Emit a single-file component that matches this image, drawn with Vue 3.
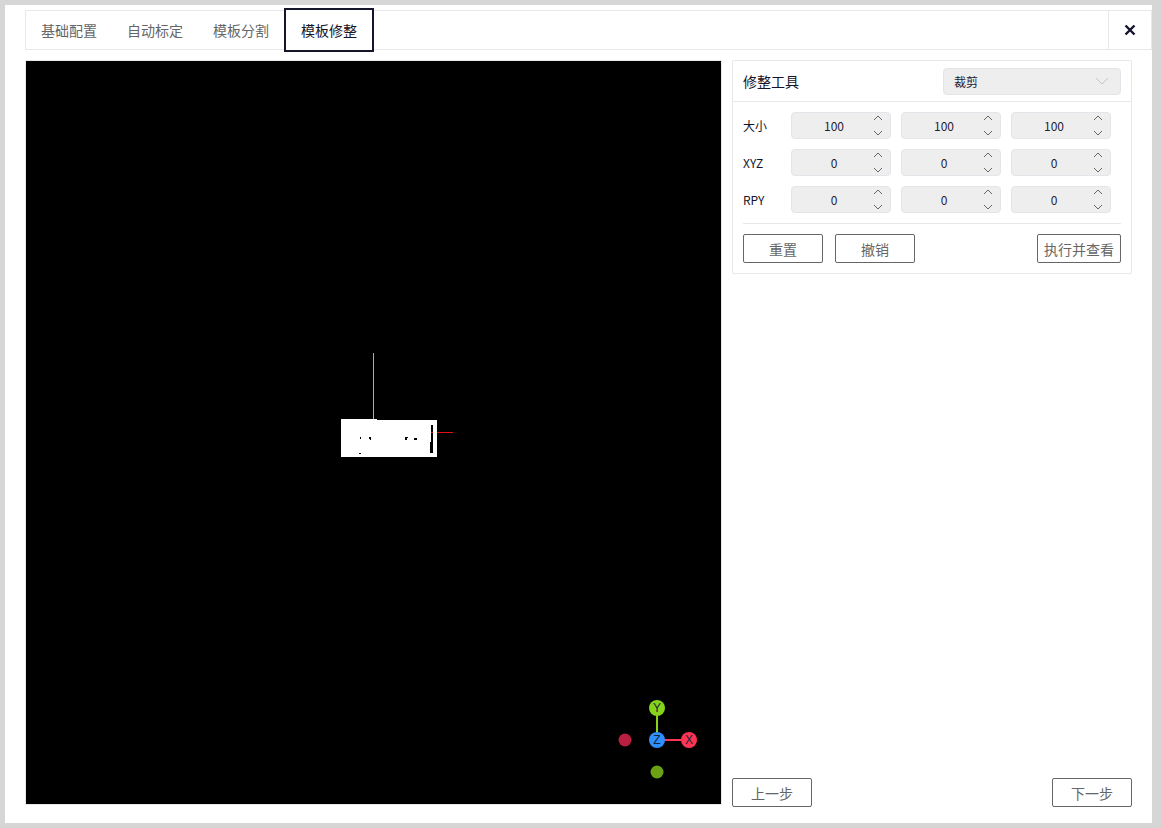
<script setup>
const tabs = ['基础配置', '自动标定', '模板分割', '模板修整'];
const activeTab = 3;

const rows = [
  { label: '大小', values: [100, 100, 100] },
  { label: 'XYZ', values: [0, 0, 0] },
  { label: 'RPY', values: [0, 0, 0] },
];

// little black holes in the point cloud
const specks = [
  [360, 437, 1, 2], [369, 437, 2, 2], [370, 439, 1, 1], [405, 437, 2, 3], [407, 437, 1, 1],
  [414, 438, 3, 2], [359, 453, 2, 1], [431, 425, 2, 28], [430, 442, 1, 9], [430, 451, 3, 2],
];
</script>

<template>
  <div class="page">
    <div class="tabs">
      <div class="tab-list">
        <div
          v-for="(tab, i) in tabs"
          :key="tab"
          class="tab"
          :class="{ active: i === activeTab }"
        >{{ tab }}</div>
      </div>
      <div class="close">
        <svg width="12" height="12" viewBox="0 0 12 12">
          <path d="M1.5 1.5L10.5 10.5M10.5 1.5L1.5 10.5" stroke="#14142b" stroke-width="2.4" fill="none" />
        </svg>
      </div>
    </div>

    <div class="main">
      <div class="viewer">
        <svg class="scene" width="695" height="743" viewBox="26 61 695 743">
          <rect x="373" y="353" width="1" height="66" fill="#6fdc5a" />
          <rect x="341" y="419" width="36" height="1" fill="#fff" />
          <rect x="341" y="420" width="96" height="37" fill="#fff" />
          <rect v-for="(s, i) in specks" :key="i" :x="s[0]" :y="s[1]" :width="s[2]" :height="s[3]" fill="#000" />
          <rect x="431" y="432" width="2" height="1" fill="#e01010" />
          <rect x="437" y="432" width="16" height="1" fill="#e01010" />
        </svg>
        <svg class="gizmo" width="90" height="90" viewBox="0 0 90 90">
          <line x1="47" y1="45" x2="47" y2="13" stroke="#87d31c" stroke-width="2" />
          <line x1="47" y1="45" x2="79" y2="45" stroke="#ff3352" stroke-width="2" />
          <circle cx="15" cy="45" r="6.5" fill="#b9203f" />
          <circle cx="47" cy="77" r="6.5" fill="#6ca115" />
          <circle cx="47" cy="13" r="8" fill="#87d31c" />
          <circle cx="79" cy="45" r="8" fill="#ff3352" />
          <circle cx="47" cy="45" r="8" fill="#2f8fff" />
          <text x="47" y="17" class="axis">Y</text>
          <text x="79" y="49" class="axis">X</text>
          <text x="47" y="49" class="axis">Z</text>
        </svg>
      </div>

      <div class="side">
        <div class="panel">
          <div class="panel-head">
            <span class="panel-title">修整工具</span>
            <div class="select">
              <span>裁剪</span>
              <svg width="14" height="8" viewBox="0 0 14 8">
                <path d="M1 1L7 7L13 1" stroke="#c4c4c8" stroke-width="1" fill="none" />
              </svg>
            </div>
          </div>
          <div class="panel-body">
            <div v-for="row in rows" :key="row.label" class="row">
              <span class="row-label">{{ row.label }}</span>
              <div v-for="(val, i) in row.values" :key="i" class="number">
                <span class="number-value">{{ val }}</span>
                <span class="stepper">
                  <svg width="10" height="6" viewBox="0 0 10 6"><path d="M1 5L5 1L9 5" stroke="#666" stroke-width="1" fill="none" /></svg>
                  <svg width="10" height="6" viewBox="0 0 10 6"><path d="M1 1L5 5L9 1" stroke="#666" stroke-width="1" fill="none" /></svg>
                </span>
              </div>
            </div>
            <div class="actions">
              <button class="btn">重置</button>
              <button class="btn">撤销</button>
              <button class="btn run">执行并查看</button>
            </div>
          </div>
        </div>

        <div class="steps">
          <button class="btn">上一步</button>
          <button class="btn">下一步</button>
        </div>
      </div>
    </div>
  </div>
</template>

<style>
body {
  background: #d6d6d6;
  overflow: hidden;
}
</style>

<style scoped>
.page {
  box-sizing: border-box;
  width: 1147px;
  height: 818px;
  margin: 5px 0 0 5px;
  padding: 5px 0 0 20px;
  background: #fff;
  font-family: "Noto Sans CJK SC", "Noto Sans", sans-serif;
  font-size: 14px;
  color: #1f2233;
}
.tabs {
  box-sizing: border-box;
  display: flex;
  justify-content: space-between;
  height: 40px;
  border: 1px solid #e8e8ec;
}
.tab-list {
  display: flex;
}
.tab {
  padding: 0 15px;
  line-height: 38px;
  height: 38px;
  color: #666;
}
.tab.active {
  height: 44px;
  margin-top: -3px;
  box-sizing: border-box;
  line-height: 40px;
  border: 2px solid #14142b;
  color: #14142b;
  background: #fff;
}
.close {
  width: 42px;
  border-left: 1px solid #e8e8ec;
  display: flex;
  align-items: center;
  justify-content: center;
}
.main {
  display: flex;
  margin-top: 10px;
}
.viewer {
  position: relative;
  box-sizing: border-box;
  width: 697px;
  height: 745px;
  border: 1px solid #e8e8ec;
  background: #000;
}
.scene {
  display: block;
}
.gizmo {
  position: absolute;
  left: 584px;
  top: 634px;
}
.axis {
  font-family: "Liberation Sans", sans-serif;
  font-size: 12px;
  fill: #14233a;
  text-anchor: middle;
}
.side {
  display: flex;
  flex-direction: column;
  justify-content: space-between;
  width: 400px;
  height: 747px;
  margin-left: 10px;
}
.panel {
  box-sizing: border-box;
  height: 214px;
  border: 1px solid #e8e8ec;
  border-radius: 2px;
}
.panel-head {
  display: flex;
  align-items: center;
  justify-content: space-between;
  height: 40px;
  padding: 0 10px;
  border-bottom: 1px solid #e8e8ec;
}
.panel-title {
  font-size: 14px;
  color: #14142b;
}
.select {
  box-sizing: border-box;
  display: flex;
  align-items: center;
  justify-content: space-between;
  width: 178px;
  height: 27px;
  padding: 0 11px 0 10px;
  background: #eee;
  border: 1px solid #e4e4ea;
  border-radius: 4px;
  font-size: 12px;
}
.panel-body {
  padding: 10px 10px 0;
}
.row {
  display: flex;
  align-items: center;
  gap: 10px;
  height: 27px;
  margin-bottom: 10px;
}
.row-label {
  width: 38px;
  font-size: 12px;
  color: #14142b;
}
.number {
  box-sizing: border-box;
  display: flex;
  align-items: center;
  width: 100px;
  height: 27px;
  background: #eee;
  border: 1px solid #e4e4ea;
  border-radius: 4px;
  font-size: 12px;
}
.number-value {
  flex: 1;
  text-align: center;
  padding-left: 10px;
}
.stepper {
  display: flex;
  flex-direction: column;
  align-items: center;
  justify-content: space-between;
  width: 24px;
  height: 21px;
}
.stepper svg {
  display: block;
}
.actions {
  display: flex;
  gap: 12px;
  margin-top: 10px;
  padding-top: 10px;
  border-top: 1px solid #e8e8ec;
}
.btn {
  box-sizing: border-box;
  width: 80px;
  height: 29px;
  padding: 0;
  background: #fff;
  border: 1px solid #666;
  border-radius: 2px;
  font-family: inherit;
  font-size: 14px;
  color: #666;
}
.btn.run {
  width: 84px;
  margin-left: auto;
}
.steps {
  display: flex;
  justify-content: space-between;
}
</style>
